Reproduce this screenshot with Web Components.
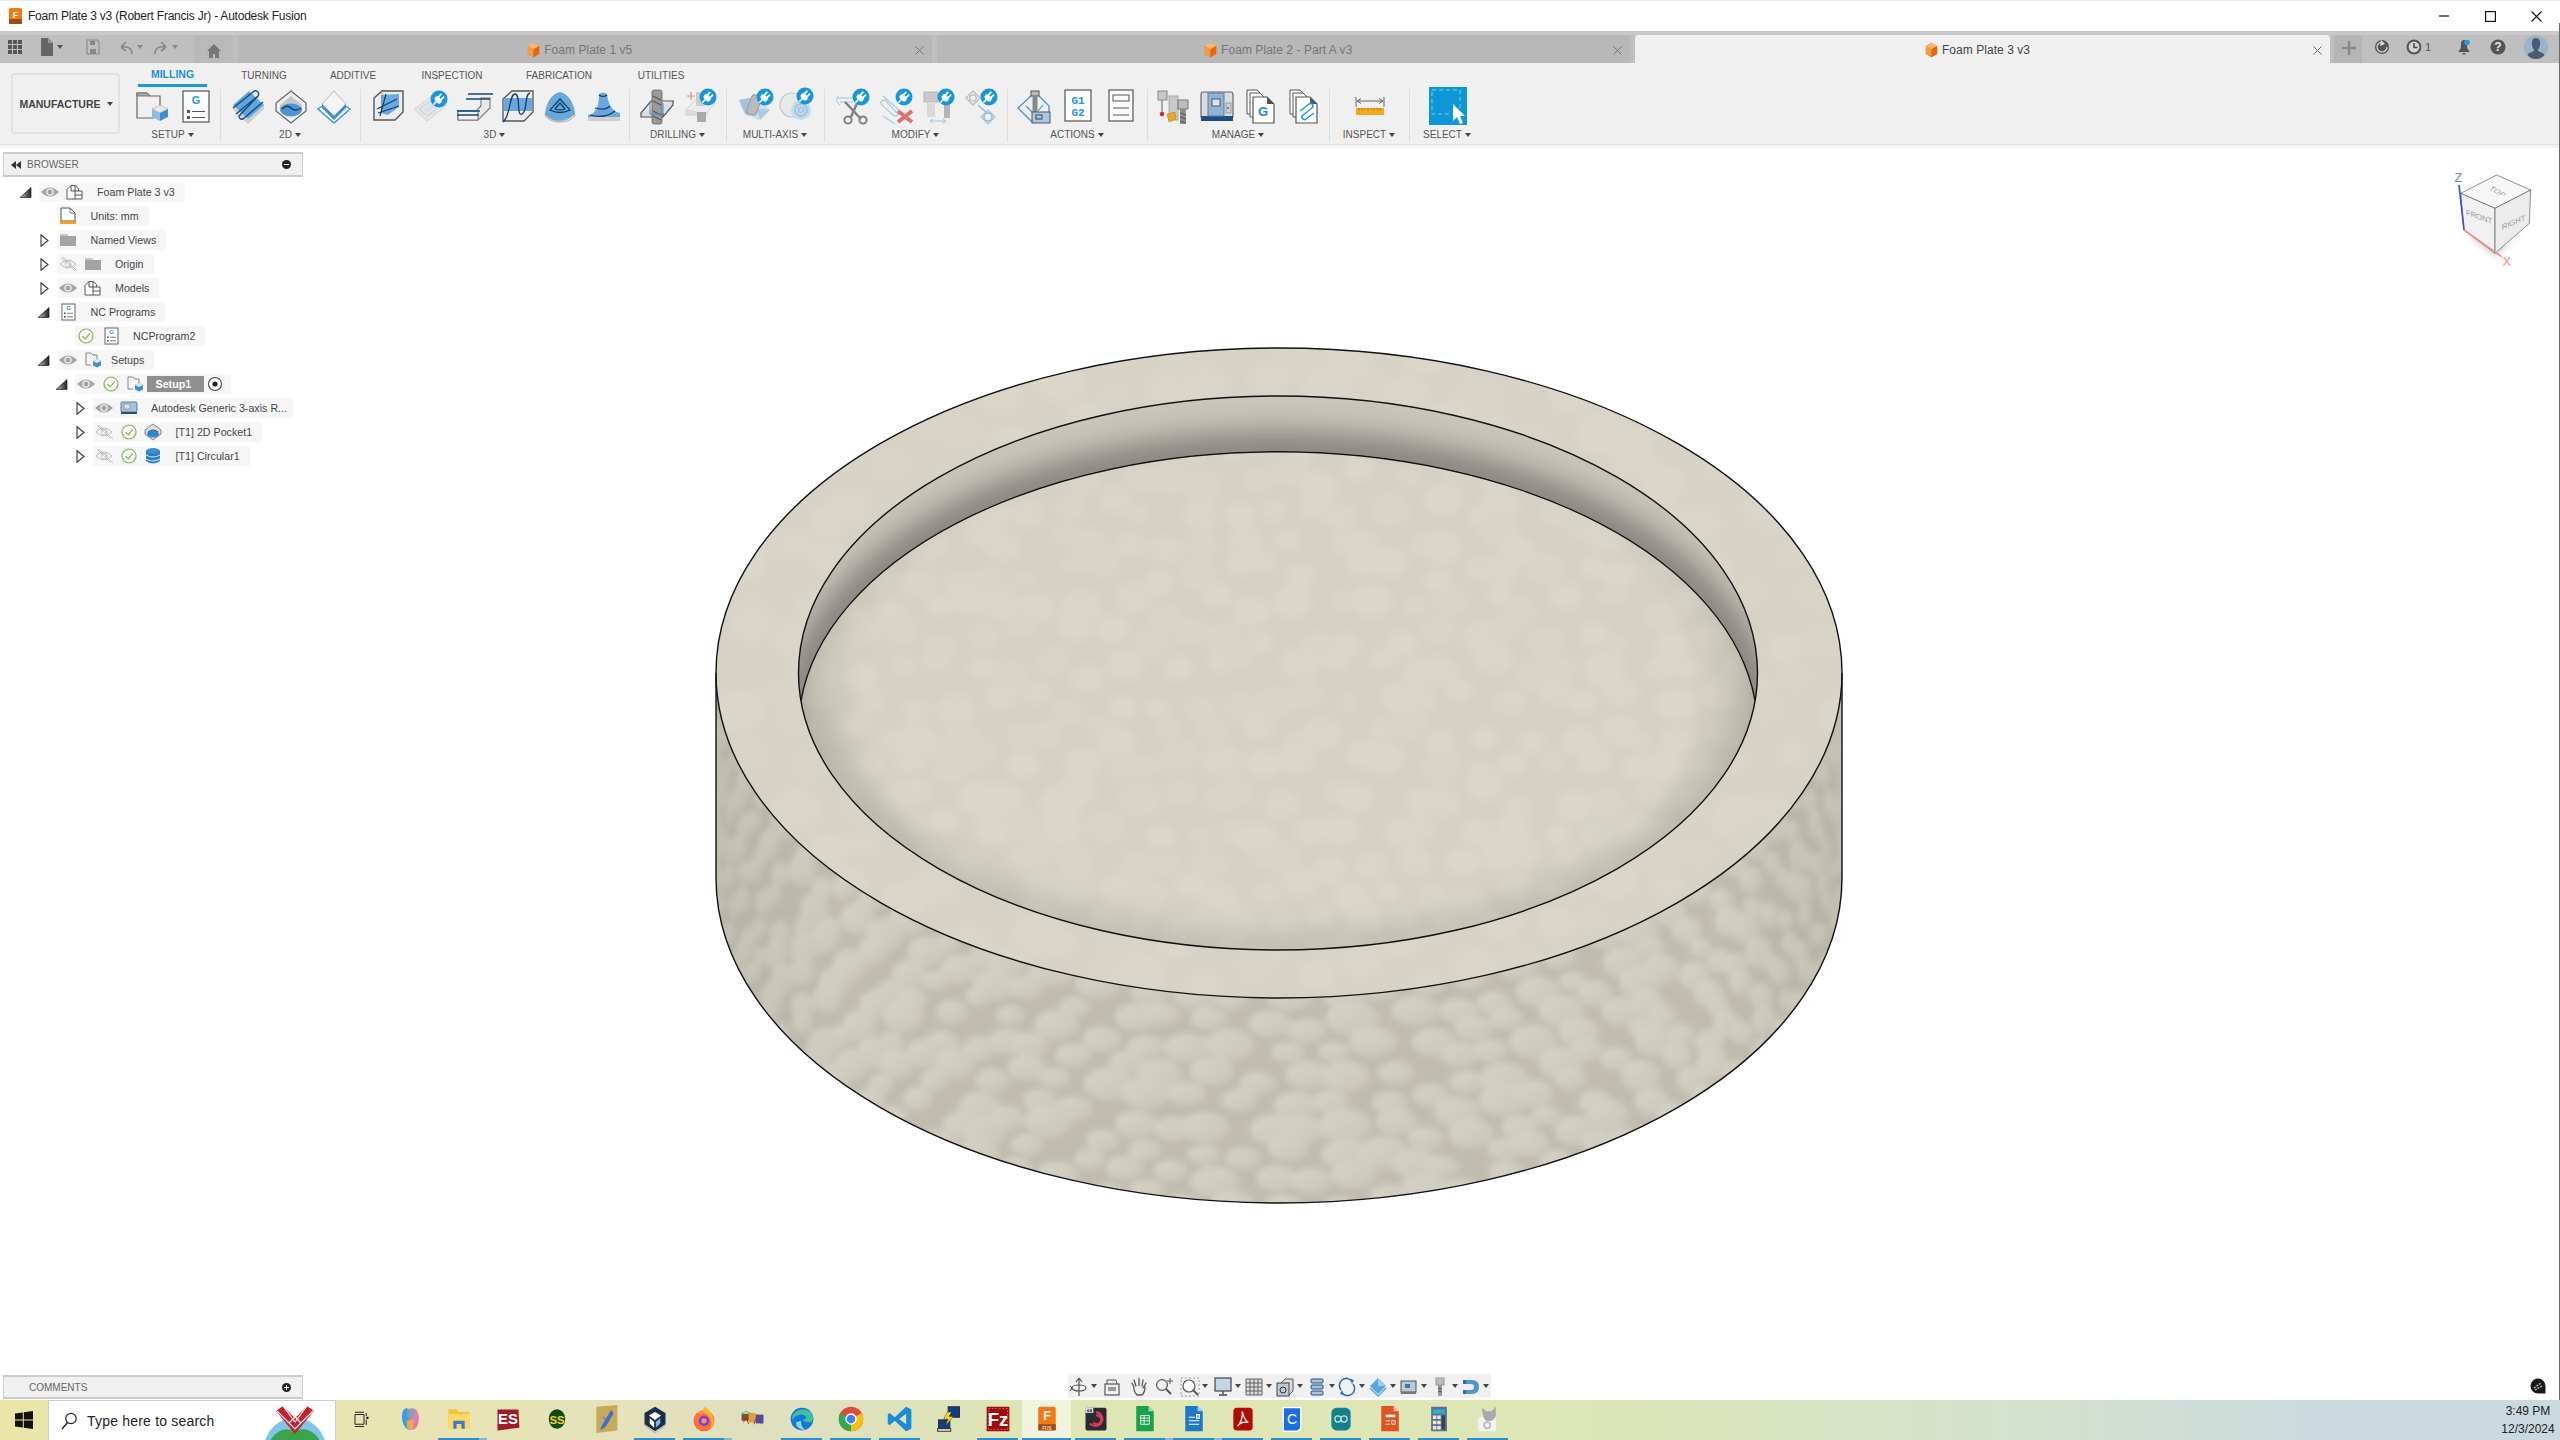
<!DOCTYPE html>
<html lang="en">
<head>
<meta charset="utf-8">
<title>Foam Plate 3 v3 - Autodesk Fusion</title>
<style>
html,body{margin:0;padding:0;background:#fff;overflow:hidden}
body{font-family:"Liberation Sans",Arial,sans-serif}
</style>
</head>
<body>
<app-window>
  <title-bar slot="title" text="Foam Plate 3 v3 (Robert Francis Jr) - Autodesk Fusion"></title-bar>
  <tab-strip slot="tabs">
    <doc-tab label="Foam Plate 1 v5"></doc-tab>
    <doc-tab label="Foam Plate 2 - Part A v3" class="w2"></doc-tab>
    <doc-tab label="Foam Plate 3 v3" active></doc-tab>
  </tab-strip>
  <ribbon-bar slot="ribbon">
    <ribbon-group label="SETUP" w="95" icons="setup ncprog"></ribbon-group>
    <ribbon-group label="2D" w="140" icons="a2d pocket2d face"></ribbon-group>
    <ribbon-group label="3D" w="269" icons="a3d p3d steep ramp scallop contour"></ribbon-group>
    <ribbon-group label="DRILLING" w="97" icons="drill drillp"></ribbon-group>
    <ribbon-group label="MULTI-AXIS" w="98" icons="multi1 multi2"></ribbon-group>
    <ribbon-group label="MODIFY" w="183" icons="scissors pathx toolmove points"></ribbon-group>
    <ribbon-group label="ACTIONS" w="140" icons="post g1g2 sheet"></ribbon-group>
    <ribbon-group label="MANAGE" w="182" icons="tools machine gdoc sdoc"></ribbon-group>
    <ribbon-group label="INSPECT" w="80" icons="measure"></ribbon-group>
    <ribbon-group label="SELECT" w="75" icons="select" last></ribbon-group>
  </ribbon-bar>
  <work-space slot="work">
    <browser-panel>
      <tree-row level="0" exp="open" icons="eye model" gap="10" end="10">Foam Plate 3 v3</tree-row>
      <tree-row level="1" icons="units" gap="10" end="10">Units: mm</tree-row>
      <tree-row level="1" exp="closed" icons="folder" gap="10" end="10">Named Views</tree-row>
      <tree-row level="1" exp="closed" icons="eyeoff folder" gap="10" end="10">Origin</tree-row>
      <tree-row level="1" exp="closed" icons="eye model" gap="10" end="10">Models</tree-row>
      <tree-row level="1" exp="open" icons="nc" gap="10" end="10">NC Programs</tree-row>
      <tree-row level="2" icons="check nc" gap="10" end="10">NCProgram2</tree-row>
      <tree-row level="1" exp="open" icons="eye setupi" gap="6" end="10">Setups</tree-row>
      <tree-row level="2" exp="open" icons="eye check setupi" gap="0" end="4" selected>Setup1</tree-row>
      <tree-row level="3" exp="closed" icons="eye mach" gap="10" end="6">Autodesk Generic 3-axis R...</tree-row>
      <tree-row level="3" exp="closed" icons="eyeoff check tp2d" gap="10" end="10">[T1] 2D Pocket1</tree-row>
      <tree-row level="3" exp="closed" icons="eyeoff check tpc" gap="10" end="10">[T1] Circular1</tree-row>
    </browser-panel>
    <work-bottom>
      <comments-panel></comments-panel>
      <nav-bar></nav-bar>
      <chat-mark></chat-mark>
    </work-bottom>
  </work-space>
  <task-bar slot="task"></task-bar>
</app-window>

<script>
/* ---------- icon library ---------- */
const plug=(x,y,r=8)=>`<circle cx="${x}" cy="${y}" r="${r}" fill="#1896d8"/><g transform="translate(${x} ${y}) rotate(45) scale(${r/8})" fill="#fff"><rect x="-3.6" y="-1.4" width="7.2" height="5" rx="2"/><rect x="-2.6" y="-5" width="1.6" height="4"/><rect x="1" y="-5" width="1.6" height="4"/><rect x="-.7" y="3" width="1.4" height="4.5"/></g>`;
const cube=(x,y,s)=>`<g transform="translate(${x} ${y}) scale(${s})"><polygon points="8,0 16,4 8,8 0,4" fill="#e9e9e9" stroke="#999" stroke-width=".5"/><polygon points="0,4 8,8 8,16 0,12" fill="#8fbce2"/><polygon points="16,4 8,8 8,16 16,12" fill="#3c8fd3"/></g>`;
const doc=(x,y,w,h,f=7)=>`<path d="M${x} ${y}H${x+w-f}L${x+w} ${y+f}V${y+h}H${x}Z" fill="#fff" stroke="#555" stroke-width="1.2"/><path d="M${x+w-f} ${y}L${x+w} ${y+f}H${x+w-f}Z" fill="#555"/>`;
const T=(x,y,s,t,c,w=700,fam='"Liberation Sans",sans-serif')=>`<text x="${x}" y="${y}" font-size="${s}" font-weight="${w}" fill="${c}" text-anchor="middle" font-family='${fam}'>${t}</text>`;
const orange=`<polygon points="8,0 15,4 15,14 8,18 1,14 1,4" fill="#f07f1b"/><polygon points="8,0 15,4 8,8 1,4" fill="#ffb56e"/><polygon points="1,4 8,8 8,18 1,14" fill="#f59a45"/><polygon points="15,4 8,8 8,18 15,14" fill="#e2680f"/>`;
const ICONS={
 setup:`<path d="M5 20V7h10l3 3h10v13" fill="none" stroke="#666" stroke-width="1.2"/><path d="M5 7h10l3 3H5z" fill="#aaa" stroke="#666" stroke-width=".8"/><path d="M5 20v12h17" fill="none" stroke="#666" stroke-width="1.2"/>${cube(20,19,1)}`,
 ncprog:`<rect x="8" y="5" width="26" height="31" fill="#fbfbfb" stroke="#555" stroke-width="1.2"/>${T(21,18,11,'G','#2a93dc')}<rect x="12" y="24" width="3" height="3" fill="#555"/><rect x="12" y="30" width="3" height="3" fill="#555"/><path d="M17 25.5H30M17 31.5H30" stroke="#555" stroke-width="1.1"/>`,
 a2d:`<polygon points="5,24 20,38 36,23 36,19 20,33 5,19" fill="#cfcfcf"/><polygon points="5,19 21,5 36,19 20,33" fill="#5fa5de"/><path d="M5 22 L25 6 a3 3 0 0 1 5 4 L8 28 M30 10 L11 30 a3 3 0 0 0 4 3 L35 16" fill="none" stroke="#17497f" stroke-width="1.4"/>`,
 pocket2d:`<polygon points="20,5 35,17 35,25 20,37 5,25 5,17" fill="#eee" stroke="#666" stroke-width="1.2"/><polygon points="20,10 31,19 31,22 20,31 9,22 9,19" fill="#c6c6c6"/><ellipse cx="20" cy="24" rx="11" ry="6.5" fill="#4e94d3"/><path d="M11 23Q16 18 20 22T30 22" fill="none" stroke="#143f6b" stroke-width="1.4"/>`,
 face:`<polygon points="20,12 36,23 20,37 4,23" fill="#fff" stroke="#3b93da" stroke-width="1.4"/><polygon points="8,18 20,5 32,18 20,30" fill="#f4f4f4" stroke="#aaa" stroke-width=".8"/><polygon points="8,18 20,30 32,18 32,22 20,34 8,22" fill="#3c8fd3"/>`,
 a3d:`<polygon points="6,12 14,5 35,5 35,26 27,34 6,34" fill="#ededed" stroke="#555" stroke-width="1.4"/><polygon points="13,9 31,8 31,21 20,29 13,27" fill="#69a8dd"/><path d="M9 23L29 13M10 27L31 20M18 8L12 30" fill="none" stroke="#143f6b" stroke-width="1.2"/><path d="M14 5 L14 12" stroke="#999" stroke-width=".8"/>`,
 p3d:`<polygon points="3,23 24,8 35,20 16,35" fill="#e6e6e6" stroke="#d4d4d4"/><polygon points="8,23 24,12 30,20 16,30" fill="none" stroke="#bcd0df"/><polygon points="12,23 24,15 27,20 16,27" fill="#d3e2ee"/>${plug(28,13,8.5)}`,
 steep:`<polygon points="4,25 22,25 27,20 27,12 36,12 36,22 24,34 4,34" fill="#e9e9e9" stroke="#777" stroke-width="1.1"/><polygon points="4,25 24,25 24,34 4,34" fill="#f2f2f2" stroke="#777" stroke-width="1.1"/><path d="M14 8H39M12 13H36M3 25H26M3 29H25" stroke="#14467c" stroke-width="1.5"/>`,
 ramp:`<polygon points="6,13 15,5 36,5 36,26 27,35 6,35" fill="#ededed" stroke="#555" stroke-width="1.3"/><rect x="7" y="12" width="28" height="13" fill="#69a8dd"/><path d="M6 36C14 30 12 8 18 8C24 8 19 31 25 28C31 26 27 8 33 7" fill="none" stroke="#143f6b" stroke-width="1.3"/>`,
 scallop:`<path d="M5 28C5 26 7 9 20 6C33 9 35 26 35 28C24 37 12 37 5 28Z" fill="#69a8dd"/><path d="M5 28C12 37 26 37 35 28C35 32 28 36 20 36C12 36 5 32 5 28Z" fill="#f1f1f1" stroke="#999" stroke-width=".8"/><path d="M20 13L30 24Q20 29 10 24Z M20 17L25 23Q20 25 15 23Z" fill="none" stroke="#123f6c" stroke-width="1.3"/>`,
 contour:`<path d="M5 35V29Q16 28 16 8Q20 5 24 8Q26 25 37 27V35Z" fill="#69a8dd"/><path d="M5 35H37V31H5Z" fill="#cfcfcf"/><path d="M16 9Q20 12 24 9M12 22Q22 25 27 20M7 29Q22 33 32 25" fill="none" stroke="#123f6c" stroke-width="1.2"/>`,
 drill:`<polygon points="4,27 14,15 36,15 26,27" fill="#ededed" stroke="#555" stroke-width="1.2"/><path d="M4 27V31H26L36 19V15M26 27V31" fill="#ddd" stroke="#555" stroke-width="1.2"/><rect x="15" y="4" width="10" height="34" rx="2" fill="#9a9a9a" stroke="#666" stroke-width=".8"/><path d="M16 10L24 14M16 15L24 19M16 25L24 29M16 30L24 34" stroke="#555" stroke-width="1.2"/><path d="M13 17V28H26V17" fill="none" stroke="#3c8fd3" stroke-width="1"/>`,
 drillp:`<polygon points="6,24 17,12 35,17 26,28" fill="#ececec" stroke="#cfcfcf"/><path d="M6 24V29H26V28" fill="#dcdcdc" stroke="#cfcfcf"/><rect x="17" y="26" width="9" height="10" fill="#aaa"/><path d="M7 10H15M11 6V14" stroke="#e58a8a" stroke-width="1.2"/><rect x="16" y="6" width="9" height="14" fill="#ccc"/>${plug(28,11,8.5)}`,
 multi1:`<polygon points="5,14 24,10 36,24 24,34 11,28" fill="#cfe0ef"/><polygon points="5,14 16,12 16,30 11,28" fill="#9fc3e3"/><polygon points="22,22 36,24 26,34" fill="#a9cbe6"/><rect x="15" y="9" width="10" height="20" rx="3" transform="rotate(20 20 19)" fill="#bbb" stroke="#999"/>${plug(31,11,8.5)}`,
 multi2:`<circle cx="15" cy="19" r="12" fill="#e9e9e9" stroke="#c6c6c6" stroke-width="1.2"/><circle cx="24" cy="24" r="10" fill="#c5dcef"/><circle cx="24" cy="24" r="6" fill="none" stroke="#a0c4e2" stroke-width="2"/><circle cx="24" cy="24" r="2.5" fill="none" stroke="#a0c4e2" stroke-width="1.5"/>${plug(28,10,8.5)}`,
 scissors:`<path d="M6 12H26M8 16H21M6 10Q3 16 8 19" fill="none" stroke="#a6c4dc" stroke-width="1"/><path d="M13 16L29 33M26 15L19 31" stroke="#7f7f7f" stroke-width="2.4"/><circle cx="16" cy="34" r="3.6" fill="none" stroke="#808080" stroke-width="2"/><circle cx="31" cy="34" r="3.6" fill="none" stroke="#808080" stroke-width="2"/>${plug(29,11,8.5)}`,
 pathx:`<path d="M8 10L24 24a4 4 0 0 1-6 5L6 18a3 3 0 0 1 5-3L23 28M8 30L20 38" fill="none" stroke="#afcce2" stroke-width="1.3"/><path d="M23 25L37 36M37 25L23 36" stroke="#e06f6f" stroke-width="4"/>${plug(29,11,8.5)}`,
 toolmove:`<rect x="6" y="6" width="14" height="10" fill="#c9c9c9" stroke="#b5b5b5"/><rect x="9" y="16" width="8" height="15" fill="#d9d9d9"/><rect x="26" y="18" width="6" height="14" fill="#b5b5b5"/><path d="M12 35H28M12 35l3-2M12 35l3 2M28 35l-3-2M28 35l-3 2" stroke="#a8c6de" stroke-width="1"/>${plug(28,11,8.5)}`,
 points:`<path d="M12 5l7 7-7 7-7-7z" fill="none" stroke="#bdbdbd" stroke-width="1.4"/><circle cx="12" cy="12" r="3.2" fill="none" stroke="#bdbdbd" stroke-width="1.3"/><path d="M17 19L26 27" stroke="#8fb8d9" stroke-width="1.4"/><path d="M27 24l7 7-7 7-7-7z" fill="none" stroke="#a3c3dd" stroke-width="1.2"/><circle cx="27" cy="31" r="4" fill="none" stroke="#8fb8d9" stroke-width="1.5"/>${plug(28,11,8.5)}`,
 post:`<path d="M17 9L3 22L17 36" fill="none" stroke="#3e92da" stroke-width="1.3"/><path d="M24 10L34 20V26" fill="none" stroke="#3e92da" stroke-width="1.3"/><path d="M11 20L17 26M28 19L23 25" fill="none" stroke="#3e92da" stroke-width="1.1"/><rect x="16" y="5" width="8" height="5" fill="#bbb" stroke="#555"/><rect x="17.5" y="10" width="5" height="16" fill="#888"/><rect x="17" y="26" width="18" height="11" fill="#a9c8e4" stroke="#555"/><rect x="21" y="29" width="6" height="4" fill="none" stroke="#345"/>`,
 g1g2:`<rect x="7" y="4" width="26" height="31" fill="#fbfbfb" stroke="#555" stroke-width="1.2"/>${T(20,18,11,'G1','#2a93dc',700,'"Liberation Mono",monospace')}${T(20,30,11,'G2','#2a93dc',700,'"Liberation Mono",monospace')}`,
 sheet:`<rect x="8" y="4" width="24" height="31" fill="#fbfbfb" stroke="#555" stroke-width="1.2"/><rect x="12" y="9" width="16" height="6" fill="none" stroke="#555"/><path d="M12 22H28M12 29H28" stroke="#555" stroke-width="1"/>`,
 tools:`<rect x="4" y="5" width="9" height="9" fill="#c8c8c8" stroke="#888"/><path d="M8 14V26" stroke="#777" stroke-width="1.2"/><circle cx="8" cy="28" r="2.2" fill="#d9232e"/><rect x="15" y="10" width="9" height="24" fill="#c9c9c9" stroke="#aaa"/><polygon points="13,28 21,26 22,33 15,36" fill="#e6ab2a" stroke="#b98414" stroke-width=".6"/><rect x="24" y="14" width="10" height="9" fill="#bdbdbd" stroke="#777"/><rect x="26" y="23" width="6" height="15" fill="#8f8f8f"/><path d="M26 27l6 2M26 31l6 2M26 35l6 2" stroke="#555"/>`,
 machine:`<path d="M6 6Q4 6 4 9V31H36V9Q36 6 34 6Z" fill="#dcdcdc" stroke="#666" stroke-width="1.2"/><rect x="4" y="30" width="32" height="5" fill="#1f4f80"/><rect x="11" y="7" width="16" height="23" fill="#8fb4d8" stroke="#5b7fa5"/><rect x="15" y="13" width="8" height="7" fill="#d9e4ee" stroke="#556"/><rect x="29" y="17" width="5" height="10" fill="#c9d3dc" stroke="#777" stroke-width=".6"/><circle cx="31" cy="22" r="1" fill="#c33"/>`,
 gdoc:`<path d="M7 4H17L21 8V28H7Z" fill="#fff" stroke="#555"/><path d="M10 7H20L24 11V31H10Z" fill="#fff" stroke="#555"/>${doc(13,11,21,26,7)}${T(23,30,13,'G','#1f86d6')}`,
 sdoc:`<path d="M7 4H17L21 8V28H7Z" fill="#fff" stroke="#555"/><path d="M10 7H20L24 11V31H10Z" fill="#fff" stroke="#555"/>${doc(13,11,21,26,7)}<path d="M17 25L26 18a2.5 2.5 0 0 1 3 4L20 29a2.5 2.5 0 0 0 3 4L31 27" fill="none" stroke="#2a93dc" stroke-width="1.5"/>`,
 measure:`<path d="M6 11V21M34 11V21" stroke="#666" stroke-width="1"/><path d="M7 15H33M7 15l4-2.5M7 15l4 2.5M33 15l-4-2.5M33 15l-4 2.5" stroke="#666" stroke-width="1" fill="none"/><rect x="6" y="22" width="28" height="7" fill="#f0a91e"/><path d="M9 22v2M12 22v3M15 22v2M18 22v3M21 22v2M24 22v3M27 22v2M30 22v3" stroke="#9a6a10" stroke-width=".7"/>`,
 select:`<rect x="1" y="1" width="38" height="38" fill="#0f96d6"/><rect x="4" y="4" width="28" height="24" fill="none" stroke="#62e2c4" stroke-width="1" stroke-dasharray="4 3"/><path d="M25 18V35L29 31L32 38L35 37L32 30L37 30Z" fill="#fff"/>`,
 eye:`<path d="M1 10Q10 1 19 10Q10 19 1 10Z" fill="#a6a6a6"/><circle cx="10" cy="10" r="3.8" fill="#e5e5e5"/><circle cx="10" cy="10" r="2.2" fill="#a0a0a0"/>`,
 eyeoff:`<path d="M2 10Q10 2 18 10Q10 18 2 10Z" fill="none" stroke="#bdbdbd" stroke-width="1"/><circle cx="10" cy="10" r="3" fill="none" stroke="#c6c6c6"/><path d="M3 3L17 17M5 3L19 17" stroke="#bdbdbd" stroke-width=".9"/>`,
 check:`<circle cx="10" cy="10" r="7" fill="#fafafa" stroke="#87b24a" stroke-width="1.2"/><path d="M6.5 10L9.3 12.8L14 7.2" fill="none" stroke="#87b24a" stroke-width="1.2"/>`,
 model:`<path d="M2 7.5L6 3.5H10V9H17V17H2Z M6 3.5V9H10 M10 3.5L13.5 6.5V9 M10 17V9 M10 13H17" fill="#fff" stroke="#444" stroke-width=".9"/>`,
 units:`<path d="M3 2H12L17 7V15H3Z" fill="#fff" stroke="#555" stroke-width="1"/><path d="M12 2V7H17" fill="none" stroke="#555" stroke-width=".8"/><rect x="2" y="15" width="16" height="3" fill="#eaa41e"/>`,
 folder:`<path d="M2 4H9L10 6H18V16H2Z" fill="#a3a3a3"/><path d="M2 4H9L10 6H2Z" fill="#c8c8c8"/>`,
 nc:`<rect x="4" y="2" width="13" height="16" fill="#fff" stroke="#555" stroke-width=".9"/>${T(10.5,8,6,'G','#2a93dc')}<rect x="6" y="10.5" width="1.6" height="1.6" fill="#444"/><rect x="6" y="14" width="1.6" height="1.6" fill="#444"/><path d="M9 11.3H15M9 14.8H15" stroke="#444" stroke-width=".7"/>`,
 setupi:`<path d="M3 9V3H8L10 5H14V9M3 9V15H8" fill="none" stroke="#777" stroke-width=".9"/><g transform="translate(10 9)"><polygon points="4,0 8,2 8,6.5 4,8.5 0,6.5 0,2" fill="#3c8fd3"/><polygon points="4,0 8,2 4,4 0,2" fill="#dbe9f5"/></g>`,
 mach:`<rect x="2" y="4" width="16" height="10" rx="1" fill="#a9c3dd" stroke="#5a6f85" stroke-width=".9"/><rect x="5" y="6" width="6" height="5" fill="#d9e4ee" stroke="#5a6f85" stroke-width=".5"/><rect x="2" y="14" width="16" height="2" fill="#244f7a"/>`,
 tp2d:`<polygon points="10,2 18,8 18,12 10,18 2,12 2,8" fill="#ddd" stroke="#666" stroke-width=".8"/><ellipse cx="10" cy="12" rx="6" ry="3.5" fill="#2b86d0"/><path d="M5 10Q10 6 15 10" fill="none" stroke="#1a4f80" stroke-width="1"/>`,
 tpc:`<ellipse cx="10" cy="5" rx="7" ry="3" fill="#3c8fd3"/><path d="M3 5V15Q10 20 17 15V5Q10 10 3 5Z" fill="#2f7fc4"/><path d="M3 9Q10 13 17 9M3 13Q10 17 17 13" fill="none" stroke="#cfe3f3" stroke-width="1"/>`,
 target:`<circle cx="10" cy="10" r="6.5" fill="#fff" stroke="#444" stroke-width="1.1"/><circle cx="10" cy="10" r="2.6" fill="#222"/>`,
 apps:`<path d="M1 1H5V5H1ZM6 1H10V5H6ZM11 1H15V5H11ZM1 6H5V10H1ZM6 6H10V10H6ZM11 6H15V10H11ZM1 11H5V15H1ZM6 11H10V15H6ZM11 11H15V15H11Z" fill="#555"/>`,
 file:`<path d="M2 0H9L14 5V18H2Z" fill="#666"/><path d="M9 0V5H14" fill="#999"/>`,
 save:`<path d="M2 1H12L14 3V15H2Z" fill="none" stroke="#888" stroke-width="1.1"/><rect x="5" y="2" width="5" height="4" fill="#888"/><rect x="5" y="10" width="6" height="5" fill="#888"/>`,
 undo:`<path d="M14 15C14 9 10 7 3 8M3 8L8 3M3 8L8 12" fill="none" stroke="#888" stroke-width="1.7"/>`,
 redo:`<path d="M2 15C2 9 6 7 13 8M13 8L8 3M13 8L8 12" fill="none" stroke="#888" stroke-width="1.7"/>`,
 home:`<path d="M8 1L15 8H13V15H9V11H7V15H3V8H1Z" fill="#777"/>`,
 plus:`<path d="M8 1V15M1 8H15" stroke="#888" stroke-width="2.4"/>`,
 sync:`<circle cx="8" cy="8" r="7" fill="#555"/><path d="M8 3A5 5 0 1 0 13 8" fill="none" stroke="#ddd" stroke-width="1.2"/><path d="M7 1L11 5L6 7Z" fill="#ddd"/>`,
 job:`<circle cx="8" cy="8" r="7.5" fill="#555"/><circle cx="8" cy="8" r="5.4" fill="#d4d4d4"/><path d="M8 4V8.5H11.5" fill="none" stroke="#444" stroke-width="1.5"/>`,
 bell:`<path d="M8 1C5 1 5 4 5 7C5 10 3 11 2 13H14C13 11 11 10 11 7C11 4 11 1 8 1Z M6 14H10L8 16Z" fill="#555"/><circle cx="11" cy="3.5" r="2.8" fill="#1f9ee0"/>`,
 help:`<circle cx="8" cy="8" r="7.6" fill="#555"/>${T(8,12.4,12,'?','#e8e8e8')}`,
 avatar:`<circle cx="12" cy="12" r="12" fill="#9db3c9"/><path d="M12 3C8.5 3 7.5 6 8 10C8.4 12 9 13.5 10 14.5V16C7 17.5 4 18 3.5 20C6 23 9 24 12 24C15 24 18 23 20.5 20C20 18 17 17.5 14 16V14.5C15 13.5 15.6 12 16 10C16.5 6 15.5 3 12 3Z" fill="#4a5a72"/>`,
 orbit:`<path d="M10 1V19M10 1L7 5M10 1L13 5" fill="none" stroke="#555" stroke-width="1.2"/><ellipse cx="10" cy="11" rx="7" ry="3" fill="none" stroke="#555" stroke-width="1.2"/><path d="M3 11L1 9M3 11L1 14" stroke="#333"/>`,
 lookat:`<rect x="3" y="7" width="14" height="11" fill="none" stroke="#555" stroke-width="1.2"/><rect x="6" y="10" width="8" height="4" fill="#999"/><path d="M5 7V3H14L15 7" fill="none" stroke="#555"/>`,
 hand:`<path d="M5 10L3 6M7 9L5 3M10 8.5V1.5M13 9L14 3M14 11L17 6M5 10Q4 13 8 18H13Q16 15 16 10" fill="none" stroke="#555" stroke-width="1.3" stroke-linecap="round"/>`,
 zoomp:`<circle cx="8" cy="8" r="5.4" fill="none" stroke="#555" stroke-width="1.2"/><path d="M12 12L17 17" stroke="#555" stroke-width="2"/><path d="M16 1V7M13 4H19" stroke="#555"/>`,
 zoomw:`<rect x="1" y="1" width="18" height="18" fill="none" stroke="#999" stroke-dasharray="2 2"/><circle cx="9" cy="9" r="6" fill="#fff" stroke="#555" stroke-width="1.2"/><path d="M13 13L18 18" stroke="#555" stroke-width="2"/>`,
 monitor:`<rect x="2" y="1" width="16" height="13" fill="#c4d6e6" stroke="#444" stroke-width="1.2"/><path d="M10 14V17M6 18H14" stroke="#444" stroke-width="1.4"/>`,
 gridi:`<path d="M2 2H18V18H2ZM2 6H18M2 10H18M2 14H18M6 2V18M10 2V18M14 2V18" fill="#ddd" stroke="#555" stroke-width=".9"/>`,
 views:`<path d="M6 6L10 2H18V14L14 18H6Z" fill="#ddd" stroke="#555"/><rect x="2" y="6" width="12" height="13" fill="#b9cbdb" stroke="#444"/><circle cx="8" cy="13" r="3" fill="none" stroke="#333"/>`,
 layers:`<rect x="4" y="2" width="12" height="4" rx="1" fill="#a9c3dd" stroke="#1f4f80"/><rect x="4" y="8" width="12" height="4" rx="1" fill="#a9c3dd" stroke="#1f4f80"/><rect x="4" y="14" width="12" height="4" rx="1" fill="#a9c3dd" stroke="#1f4f80"/>`,
 cycle:`<path d="M4 13A7 7 0 0 1 15 4M16 7A7 7 0 0 1 5 16" fill="none" stroke="#2a6fb0" stroke-width="1.6"/><path d="M13 2L17 3L15 7ZM7 18L3 17L5 13Z" fill="#2a6fb0"/>`,
 stack:`<path d="M10 1L18 9L10 17L2 9Z" fill="#5aa7e0"/><path d="M2 11L10 19L18 11" fill="none" stroke="#5aa7e0" stroke-width="1.5"/><path d="M10 1L18 9L10 9Z" fill="#9ccbec"/>`,
 box2:`<rect x="2" y="4" width="15" height="11" fill="#b9cbdb" stroke="#555"/><rect x="6" y="7" width="5" height="4" fill="#3c77ad"/><rect x="2" y="15" width="15" height="2" fill="#777"/>`,
 toolv:`<rect x="6" y="1" width="8" height="7" fill="#bbb" stroke="#999"/><rect x="8" y="8" width="4" height="11" fill="#999"/><path d="M8 11l4 1M8 14l4 1" stroke="#555"/>`,
 magnet:`<path d="M2 3H11Q18 3 18 10Q18 17 11 17H2V13H10Q13 13 13 10Q13 7 10 7H2Z" fill="#4f95cf"/><rect x="2" y="3" width="3" height="4" fill="#2b6da7"/><rect x="2" y="13" width="3" height="4" fill="#2b6da7"/>`,
 taskview:`<path d="M8 7H20M8 26H20M8 10H20V23H8Z M23 8V12M23 17V24" fill="none" stroke="#222" stroke-width="1.3"/><rect x="23" y="13" width="3" height="3" fill="#222"/>`,
 copilot:`<path d="M10 3Q15 2 16 8L21 26Q19 30 14 29Q7 26 6 14Q6 5 10 3Z" fill="#3f9bea"/><path d="M20 3Q26 4 27 14Q27 25 21 29Q17 30 16 24L12 7Q14 2 20 3Z" fill="#e56bb2" opacity=".9"/><path d="M12 18L21 16L20 28Q14 30 12 26Z" fill="#f2b23a" opacity=".85"/><path d="M12 4L22 4L21 14L12 15Z" fill="#3ac0b4" opacity=".55"/>`,
 explorer:`<path d="M3 4H13L15 7H29V28H3Z" fill="#f4c542"/><rect x="3" y="10" width="26" height="18" fill="#ffd968"/><path d="M9 28V18H23V28H19V22H13V28Z" fill="#2f80c8"/>`,
 es:`<path d="M4 5H28L29 26L4 29Z" fill="#9e1b2c"/>${T(16,22,17,'ES','#fff')}`,
 ss:`<ellipse cx="16" cy="16" rx="11" ry="13" fill="#0f4a14"/>${T(16,22,15,'SS','#f5d21a')}`,
 bluetool:`<path d="M5 2L29 0V29L5 32Z" fill="#c9a95a"/><path d="M22 6L12 23L10 28L15 25L24 10Z M12 14L19 18" fill="#3d6ed4" stroke="#3d6ed4"/>`,
 vbox:`<polygon points="16,2 28,9 28,22 16,30 4,22 4,9" fill="#1a2e4a"/><polygon points="16,8 23,12 16,17 9,12" fill="#fff"/><polygon points="10,15 15,19 15,26 10,21" fill="#fff"/><polygon points="22,15 17,19 17,26 22,21" fill="#7fb8e5"/><path d="M4 23L16 32L28 23" fill="none" stroke="#b4bcc6" stroke-width="1.5"/>`,
 firefox:`<circle cx="16" cy="18" r="12" fill="#ff7139"/><path d="M8 8Q14 14 16 2Q24 6 26 14Q30 24 22 28Q30 14 14 8Z" fill="#ffb02e"/><circle cx="16" cy="18" r="6" fill="#7542e5"/><circle cx="16" cy="18" r="3" fill="#ff9640"/>`,
 misc:`<rect x="3" y="10" width="9" height="8" fill="#7a5230"/><rect x="11" y="9" width="8" height="11" fill="#d7a33e"/><rect x="19" y="11" width="9" height="10" fill="#3a56b0"/><path d="M5 20L8 14L11 22M17 22L21 11L26 22" stroke="#c22" fill="none"/><path d="M3 10L8 7L14 10" stroke="#4a9" fill="none"/>`,
 edge:`<circle cx="16" cy="16" r="13" fill="#1678d4"/><path d="M5 12Q14 0 26 8Q31 14 27 19Q20 21 17 17Q25 14 17 11Q8 10 5 18Z" fill="#3bc2a0"/><path d="M9 20Q10 28 20 29Q14 24 15 18Z" fill="#8fd5f7"/>`,
 chrome:`<circle cx="16" cy="16" r="14" fill="#dd4b39"/><path d="M16 16L28.1 9A14 14 0 0 1 16 30Z" fill="#f4c20d"/><path d="M16 16L16 30A14 14 0 0 1 3.9 9Z" fill="#2fa84f"/><circle cx="16" cy="16" r="6.5" fill="#fff"/><circle cx="16" cy="16" r="5" fill="#3c84e8"/>`,
 vscode:`<path d="M23 2L29 5V27L23 30L10 18L4 23L2 21V11L4 9L10 14ZM23 10L15 16L23 22Z" fill="#1b8ad8"/>`,
 putty:`<rect x="15" y="2" width="13" height="12" fill="#123c8a" stroke="#222"/><rect x="4" y="17" width="13" height="10" fill="#123c8a" stroke="#222"/><rect x="3" y="27" width="15" height="3" fill="#ddd" stroke="#222"/><path d="M14 8L10 16H15L12 24L21 13H16L19 8Z" fill="#f4dc25" stroke="#222" stroke-width=".5"/>`,
 filezilla:`<rect x="3" y="2" width="26" height="28" fill="#a10d0d"/><rect x="5" y="4" width="22" height="24" fill="none" stroke="#d96a6a" stroke-dasharray="2 2"/>${T(16,24,21,'Fz','#fff',700)}`,
 fusion:`<rect x="6" y="2" width="20" height="27" rx="2" fill="#f37a13"/><rect x="6" y="22" width="20" height="7" fill="#9a4d14"/>${T(16,17,14,'F','#fff')}${T(16,28,5.5,'FUS','#f6d7b8')}`,
 resolve:`<rect x="4" y="3" width="24" height="26" rx="2" fill="#2a2a30"/><path d="M16 8A8 8 0 1 1 9 21M16 12A5 5 0 1 1 13 20" fill="none" stroke="#e0385c" stroke-width="2.4"/><rect x="4" y="3" width="9" height="6" fill="#ddd"/>${T(8.5,8,5,'64','#222')}`,
 lcalc:`<path d="M6 1H20L26 7V30H6Z" fill="#18a24a"/><path d="M20 1L26 7H20Z" fill="#9fdcb4"/><path d="M11 12H21V22H11Z M11 15H21M11 18H21M15 12V22" fill="none" stroke="#fff" stroke-width="1"/>`,
 lwrite:`<path d="M6 1H20L26 7V30H6Z" fill="#1d78c8"/><path d="M20 1L26 7H20Z" fill="#9fd0f2"/><path d="M10 14H17M10 18H22M10 22H22M19 11H22V15H19Z" stroke="#fff" fill="none" stroke-width="1.4"/>`,
 acrobat:`<rect x="5" y="3" width="22" height="26" rx="4" fill="#b30b00"/><path d="M10 24C14 20 16 12 15 8C17 8 15 15 22 20C18 19 13 20 10 24Z" fill="none" stroke="#fff" stroke-width="1.4"/>`,
 cdoc:`<path d="M6 3H26V27L22 30H6Z" fill="#1e6de0" stroke="#fff" stroke-width="1.5"/>${T(16,22,16,'C','#fff',400)}`,
 arduino:`<rect x="5" y="3" width="22" height="26" rx="6" fill="#16808a"/><path d="M9 16a3.5 3.5 0 0 1 7 0a3.5 3.5 0 0 0 7 0a3.5 3.5 0 0 0-7 0a3.5 3.5 0 0 1-7 0Z" fill="none" stroke="#bfe6e6" stroke-width="1.4"/>`,
 limp:`<path d="M6 1H20L26 7V30H6Z" fill="#e2521f"/><path d="M20 1L26 7H20Z" fill="#f7bca0"/><rect x="11" y="11" width="11" height="3" fill="#fff"/><path d="M11 18H16M11 22H16M18 18H22V22H18Z" stroke="#fff" fill="none"/>`,
 calc:`<rect x="7" y="2" width="18" height="28" fill="#5e7186"/><rect x="9" y="5" width="14" height="5" fill="#2eaad8"/><path d="M9 12h4v4H9zM14 12h4v4h-4zM9 18h4v4H9zM14 18h4v4h-4zM9 24h4v4H9zM14 24h4v4h-4z" fill="#e8e8e8"/><rect x="19" y="12" width="4" height="16" fill="#32465c"/>`,
 gimp:`<rect x="5" y="14" width="20" height="16" fill="#f3f3f3"/><path d="M10 10L9 3L14 7H20L25 2L25 12Q22 20 14 18Q11 16 10 10Z" fill="#a9a9a9"/><circle cx="15" cy="23" r="3.5" fill="none" stroke="#bbb" stroke-width="2"/>`
};
class XIcon extends HTMLElement{
  connectedCallback(){
    const w=+this.getAttribute('w')||40,h=+this.getAttribute('h')||w,vb=this.getAttribute('vb')||`0 0 ${w} ${h}`;
    this.attachShadow({mode:'open'}).innerHTML=`<style>:host{display:inline-flex;flex:none;width:${w}px;height:${h}px}svg{display:block;overflow:visible}</style><svg width="${w}" height="${h}" viewBox="${vb}">${ICONS[this.getAttribute('name')]||''}</svg>`;
  }
}
customElements.define('x-icon',XIcon);
const caret=(c='#555',m='0 0 0 4px')=>`<i style="display:inline-block;width:0;height:0;border:3px solid transparent;border-top:4px solid ${c};border-bottom:0;margin:${m};vertical-align:middle"></i>`;

class AppWindow extends HTMLElement{constructor(){super();this.attachShadow({mode:'open'}).innerHTML=`<style>
:host{display:grid;grid-template-rows:31px 32px 85px 1252px 40px;width:2560px;height:1440px;position:relative;overflow:hidden;color:#444;font-family:"Liberation Sans",Arial,sans-serif}
.edge{position:absolute;right:0;top:23px;bottom:40px;width:1px;background:#6a6a6a}
</style><slot name="title"></slot><slot name="tabs"></slot><slot name="ribbon"></slot><slot name="work"></slot><slot name="task"></slot><div class="edge"></div>`}}
customElements.define('app-window',AppWindow);

class TitleBar extends HTMLElement{connectedCallback(){this.attachShadow({mode:'open'}).innerHTML=`<style>
:host{display:flex;align-items:center;background:#fff;border-top:1px solid #ececec;box-sizing:border-box;height:31px;padding-left:9px;padding-right:1px}
svg{display:block}
.t{margin-left:6px;font-size:12px;color:#222;white-space:nowrap;letter-spacing:-.22px}
.ctl{margin-left:auto;display:flex}
.ctl b{display:flex;width:46px;height:30px;align-items:center;justify-content:center}
</style>
<svg width="13" height="16" viewBox="0 0 13 16"><rect width="13" height="16" rx="1.5" fill="#f37a13"/><rect y="11" width="13" height="5" fill="#9a4d14"/><text x="6.5" y="9.5" font-size="9" font-weight="700" fill="#fff" text-anchor="middle" font-family="Liberation Sans">F</text></svg>
<span class="t">${this.getAttribute('text')}</span>
<div class="ctl">
<b><svg width="10" height="10"><path d="M0 5H10" stroke="#111" stroke-width="1.2"/></svg></b>
<b><svg width="11" height="11"><rect x=".6" y=".6" width="9.8" height="9.8" fill="none" stroke="#111" stroke-width="1.2"/></svg></b>
<b><svg width="11" height="11"><path d="M.5 .5L10.5 10.5M10.5 .5L.5 10.5" stroke="#111" stroke-width="1.1"/></svg></b>
</div>`}}
customElements.define('title-bar',TitleBar);

class TabStrip extends HTMLElement{connectedCallback(){this.attachShadow({mode:'open'}).innerHTML=`<style>
:host{display:flex;height:32px;background:linear-gradient(#c8c8c8 4px,#bfbfbf 4px);box-sizing:border-box;padding-top:4px}
.qa{width:194px;flex:none;display:flex;align-items:center;position:relative;box-sizing:border-box;padding:0 0 4px 7px}
.home{width:39px;flex:none;background:#b9b9b9;border-radius:3px 3px 0 0;display:flex;align-items:center;justify-content:center;margin-right:5px;padding-top:3px;box-sizing:border-box}
.tabs{display:flex;gap:5px;flex:none}
.plus{width:28px;background:#b5b5b5;margin-left:4px;display:flex;align-items:center;justify-content:center;border-radius:3px 3px 0 0;box-sizing:border-box;padding-bottom:3px}
.right{display:flex;align-items:center;height:24px;margin-left:12px;color:#555;font-size:11px}
</style>
<div class="qa"><x-icon name="apps" w="16"></x-icon>
<x-icon name="file" w="16" h="18" style="margin-left:16px"></x-icon>${caret('#555','0 0 0 2px')}
<x-icon name="save" w="16" style="margin-left:22px"></x-icon>
<x-icon name="undo" w="16" style="margin-left:17px"></x-icon>${caret('#888','0 0 0 3px')}
<x-icon name="redo" w="16" style="margin-left:10px"></x-icon>${caret('#888','0 0 0 3px')}</div>
<div class="home"><x-icon name="home" w="16"></x-icon></div>
<div class="tabs"><slot></slot></div>
<div class="plus"><x-icon name="plus" w="15"></x-icon></div>
<div class="right">
<x-icon name="sync" w="16"></x-icon>
<x-icon name="job" w="16" style="margin-left:16px"></x-icon><span style="margin-left:3px;width:8px">1</span>
<x-icon name="bell" w="16" style="margin-left:23px"></x-icon>
<x-icon name="help" w="16" style="margin-left:18px"></x-icon>
<x-icon name="avatar" w="24" style="margin-left:18px"></x-icon>
</div>`}}
customElements.define('tab-strip',TabStrip);

class DocTab extends HTMLElement{connectedCallback(){const a=this.hasAttribute('active');this.attachShadow({mode:'open'}).innerHTML=`<style>
:host{display:grid;grid-template-columns:1fr auto 1fr;align-items:center;width:${a?695:693.5}px;height:28px;background:${a?'#f0f0f0':'#b8b8b8'};border-radius:3px 3px 0 0;font-size:12px;color:${a?'#444':'#767676'};white-space:nowrap;letter-spacing:.05px}
.c{display:flex;align-items:center;gap:4px;padding-right:10px;padding-top:2px}
.x{justify-self:end;margin-right:8px;margin-top:2px;display:block}
svg{display:block}
</style><span></span><span class="c"><svg width="13" height="16" viewBox="0 0 16 18">${orange}</svg>${this.getAttribute('label')}</span>
<svg class="x" width="9" height="9"><path d="M.5 .5L8.5 8.5M8.5 .5L.5 8.5" stroke="${a?'#666':'#777'}" stroke-width="1"/></svg>`}}
customElements.define('doc-tab',DocTab);

class RibbonBar extends HTMLElement{connectedCallback(){
 const tabs=[['MILLING',69],['TURNING',114],['ADDITIVE',64],['INSPECTION',134],['FABRICATION',80],['UTILITIES',124]];
 this.attachShadow({mode:'open'}).innerHTML=`<style>
:host{display:block;height:85px;background:#f3f3f3;box-sizing:border-box}
.bar{display:grid;grid-template-columns:126px 1fr;grid-template-rows:24px 57px;height:81px;background:#f0f0f0;border-bottom:1px solid #e3e3e3;box-sizing:content-box}
.mf{grid-row:1/3;margin:10px 6px 10px 11px;border:2px solid #e2e2e2;border-radius:4px;display:flex;align-items:center;justify-content:center;font-size:10.5px;font-weight:700;color:#444;white-space:nowrap;padding-left:1px}
.tabs{display:flex;padding-left:12px;align-items:stretch}
.tabs span{display:flex;align-items:center;justify-content:center;font-size:10px;color:#555;box-sizing:border-box;padding-top:1px;flex:none;white-space:nowrap}
.tabs span.on{color:#1b90d2;border-bottom:3px solid #1f9ad8;font-weight:700;font-size:10.5px;padding-top:0}
.groups{display:flex}
</style><div class="bar"><div class="mf">MANUFACTURE${caret('#444','0 0 0 6px')}</div>
<div class="tabs">${tabs.map(([t,w],i)=>`<span class="${i?'':'on'}" style="width:${w}px">${t}</span>`).join('')}</div>
<div class="groups"><slot></slot></div></div>`}}
customElements.define('ribbon-bar',RibbonBar);

class RibbonGroup extends HTMLElement{connectedCallback(){
 const ic=this.getAttribute('icons').split(' ');
 this.attachShadow({mode:'open'}).innerHTML=`<style>
:host{display:flex;flex-direction:column;align-items:center;flex:none;width:${this.getAttribute('w')}px;box-sizing:border-box;height:53px;margin-top:2px;${this.hasAttribute('last')?'':'border-right:1px solid #dedede'}}
.r{display:flex;align-items:center;justify-content:center;height:34px;gap:3px}
.l{margin-top:5px;font-size:10px;line-height:14px;color:#555;white-space:nowrap;margin-left:-1px}
</style><div class="r">${ic.map(n=>`<x-icon name="${n}" w="40"></x-icon>`).join('')}</div><div class="l">${this.getAttribute('label')}${caret('#444','-1px 0 0 3px')}</div>`}}
customElements.define('ribbon-group',RibbonGroup);

class WorkSpace extends HTMLElement{constructor(){super();this.attachShadow({mode:'open'}).innerHTML=`<style>
:host{display:flex;flex-direction:column;justify-content:space-between;position:relative;height:1252px;background:#fff;box-sizing:border-box;padding:4px 0 1px 3px}
foam-plate{position:absolute;left:700px;top:192px}
view-cube{position:absolute;left:2440px;top:17px}
::slotted(*){position:relative}
</style><foam-plate></foam-plate><view-cube></view-cube><slot></slot>`}}
customElements.define('work-space',WorkSpace);

class FoamPlate extends HTMLElement{connectedCallback(){
 const O={cx:1279,cy:673,rx:563,ry:325},dz=205,I={cx:1278,cy:673,rx:479.5,ry:277},fz=55;
 const R=`x="700" y="340" width="1160" height="880"`;
 let seed=12345;const rnd=()=>{seed=(seed*16807)%2147483647;return seed/2147483647};
 /* soft cells over a flat face, on a jittered hexagonal lattice */
 const flat=(x0,y0,x1,y1,dx,dy,rx,ry,cols)=>{let s='',row=0;for(let y=y0;y<y1;y+=dy,row++){for(let x=x0+(row%2?dx/2:0);x<x1;x+=dx){const k=.7+rnd()*.55;s+=`<ellipse cx="${(x+(rnd()-.5)*dx*.7).toFixed(1)}" cy="${(y+(rnd()-.5)*dy*.7).toFixed(1)}" rx="${(rx*k).toFixed(1)}" ry="${(ry*k).toFixed(1)}" fill="${cols[Math.floor(rnd()*cols.length)]}"/>`}}return s};
 /* cells wrapped round the cylinder wall: they narrow toward the silhouette */
 const wall=()=>{let s='';const dTh=47/O.rx,rows=9;for(let r=0;r<rows;r++){for(let th=-Math.PI/2+(r%2?dTh/2:0);th<Math.PI/2;th+=dTh){const t=th+(rnd()-.5)*dTh*.55,z=(r+.1)*dz/(rows-1)+(rnd()-.5)*13,cs=Math.cos(t),x=O.cx+O.rx*Math.sin(t),y=O.cy+O.ry*cs+z;const k=.72+rnd()*.5;s+=`<ellipse cx="${x.toFixed(1)}" cy="${y.toFixed(1)}" rx="${(22*k*Math.max(cs,.2)).toFixed(1)}" ry="${(13.5*k).toFixed(1)}" fill="url(#bump)"/>`}}return s};
 this.attachShadow({mode:'open'}).innerHTML=`<style>:host{display:block;width:1160px;height:880px}svg{display:block}</style>
<svg width="1160" height="880" viewBox="700 340 1160 880">
<defs>
<filter id="b3" x="-2%" y="-2%" width="104%" height="104%"><feGaussianBlur stdDeviation="4.5"/></filter>
<filter id="b2" x="-2%" y="-2%" width="104%" height="104%"><feGaussianBlur stdDeviation="3"/></filter>
<filter id="b14" x="-10%" y="-10%" width="120%" height="120%"><feGaussianBlur stdDeviation="16"/></filter>
<linearGradient id="bump" x1="0" y1="0" x2="1" y2="1"><stop offset="0" stop-color="#dad7cb"/><stop offset="1" stop-color="#cbc8bb"/></linearGradient>
<radialGradient id="floorG" cx=".5" cy=".49" r=".51"><stop offset="0" stop-color="#8a887c" stop-opacity="0"/><stop offset=".84" stop-color="#8a887c" stop-opacity="0"/><stop offset=".95" stop-color="#8a887c" stop-opacity=".18"/><stop offset="1" stop-color="#77756b" stop-opacity=".5"/></radialGradient>
<linearGradient id="wallG" x1="0" x2="1" y1="0" y2="0"><stop offset="0" stop-color="#77756b" stop-opacity=".2"/><stop offset=".12" stop-color="#77756b" stop-opacity=".03"/><stop offset=".88" stop-color="#77756b" stop-opacity=".03"/><stop offset="1" stop-color="#77756b" stop-opacity=".2"/></linearGradient>
<clipPath id="hull"><path d="M${O.cx-O.rx} ${O.cy}V${O.cy+dz}A${O.rx} ${O.ry} 0 0 0 ${O.cx+O.rx} ${O.cy+dz}V${O.cy}A${O.rx} ${O.ry} 0 0 0 ${O.cx-O.rx} ${O.cy}Z"/></clipPath>
<clipPath id="outerC"><ellipse cx="${O.cx}" cy="${O.cy}" rx="${O.rx}" ry="${O.ry}"/></clipPath>
<clipPath id="innerC"><ellipse cx="${I.cx}" cy="${I.cy}" rx="${I.rx}" ry="${I.ry}"/></clipPath>
<clipPath id="floorC"><ellipse cx="${I.cx}" cy="${I.cy+fz}" rx="${I.rx}" ry="${I.ry}"/></clipPath>
</defs>
<g clip-path="url(#hull)"><rect ${R} fill="#c2bfb2"/><g filter="url(#b2)">${wall()}</g><rect ${R} fill="url(#wallG)"/></g>
<g clip-path="url(#outerC)"><rect ${R} fill="#d6d3c6"/><g filter="url(#b3)">${flat(710,345,1850,1005,52,42,22,18,['#d9d6c9','#dad7ca','#d8d5c8'])}</g></g>
<g clip-path="url(#innerC)">
<ellipse cx="${I.cx}" cy="${I.cy}" rx="${I.rx}" ry="${I.ry}" fill="#c9c7bc"/>
<ellipse cx="${I.cx}" cy="${I.cy+fz}" rx="${I.rx}" ry="${I.ry}" fill="none" stroke="#4f4e4b" stroke-width="34" filter="url(#b14)" opacity=".66"/>
<g clip-path="url(#floorC)"><rect ${R} fill="#d4d1c4"/><g filter="url(#b3)">${flat(790,445,1770,1010,40,32,17,14,['#d9d6c9','#dad7ca','#d8d5c8'])}</g>
<ellipse cx="${I.cx}" cy="${I.cy+fz/2}" rx="${I.rx+2}" ry="${I.ry+fz/2}" fill="url(#floorG)"/>
<ellipse cx="${I.cx}" cy="${I.cy}" rx="${I.rx}" ry="${I.ry}" fill="none" stroke="#8f8c82" stroke-width="20" filter="url(#b14)" opacity=".5"/>
</g></g>
<g fill="none" stroke="#111" stroke-width="1.4">
<path d="M${O.cx-O.rx} ${O.cy}V${O.cy+dz}A${O.rx} ${O.ry} 0 0 0 ${O.cx+O.rx} ${O.cy+dz}V${O.cy}"/>
<ellipse cx="${O.cx}" cy="${O.cy}" rx="${O.rx}" ry="${O.ry}"/>
<ellipse cx="${I.cx}" cy="${I.cy}" rx="${I.rx}" ry="${I.ry}"/>
<path d="M${I.cx-477} 700.5A${I.rx} ${I.ry} 0 0 1 ${I.cx+477} 700.5"/>
</g></svg>`}}
customElements.define('foam-plate',FoamPlate);

class ViewCube extends HTMLElement{connectedCallback(){this.attachShadow({mode:'open'}).innerHTML=`<style>:host{display:block;width:110px;height:110px}svg{display:block}</style>
<svg width="110" height="110" viewBox="0 0 330 330"><defs><filter id="s" x="-30%" y="-30%" width="160%" height="160%"><feGaussianBlur stdDeviation="9"/></filter></defs>
<polygon points="72,200 165,275 272,185 200,240" fill="#aaa" opacity=".55" filter="url(#s)"/>
<polygon points="170,30 272,75 165,130 62,85" fill="#f7f7f7" stroke="#555" stroke-width="2"/>
<polygon points="62,85 165,130 165,265 72,195" fill="#f1f1f1" stroke="#555" stroke-width="2"/>
<polygon points="272,75 268,175 165,265 165,130" fill="#ececec" stroke="#555" stroke-width="2"/>
<text font-family="Liberation Sans" font-size="24" fill="#a0a0a0" transform="matrix(.9 .5 -.7 .55 145 72)">TOP</text>
<text font-family="Liberation Sans" font-size="24" fill="#999" transform="matrix(.95 .33 0 1 78 150)">FRONT</text>
<text font-family="Liberation Sans" font-size="24" fill="#999" transform="matrix(.95 -.4 0 1 185 195)">RIGHT</text>
<path d="M57 60L72 195" stroke="#4747d8" stroke-width="5"/><path d="M72 195L185 275" stroke="#ee8f8f" stroke-width="5"/>
<text x="55" y="50" text-anchor="middle" font-family="Liberation Sans" font-size="38" fill="#7a7ae8">Z</text>
<text x="200" y="304" text-anchor="middle" font-family="Liberation Sans" font-size="38" fill="#f08a8a">X</text></svg>`}}
customElements.define('view-cube',ViewCube);

const panelBase=`border:1px solid #cbcbcb;border-width:2px 1px;background:#f0f0f0;box-sizing:border-box;width:300px;display:flex;align-items:center;font-size:10px;color:#666;`;
class BrowserPanel extends HTMLElement{connectedCallback(){this.attachShadow({mode:'open'}).innerHTML=`<style>
:host{display:block;width:300px}
.h{${panelBase}height:25px;padding:0 11px 0 7px}
.h span{margin-left:6px}
.m{margin-left:auto;width:9px;height:9px;border-radius:50%;background:#222;position:relative}
.m::after{content:"";position:absolute;left:2px;right:2px;top:4px;height:1px;background:#fff}
.rows{padding-top:3px}
</style><div class="h"><svg width="10" height="8"><path d="M5 0V8L0 4ZM10 0V8L5 4Z" fill="#333"/></svg><span>BROWSER</span><i class="m"></i></div><div class="rows"><slot></slot></div>`}}
customElements.define('browser-panel',BrowserPanel);

class TreeRow extends HTMLElement{connectedCallback(){
 const lv=+this.getAttribute('level')||0,e=this.getAttribute('exp'),ic=this.getAttribute('icons').split(' '),sel=this.hasAttribute('selected');
 const exp=e==='open'?`<svg width="12" height="11"><defs><linearGradient id="g" x1="0" x2="1"><stop offset="0" stop-color="#bbb"/><stop offset="1" stop-color="#222"/></linearGradient></defs><path d="M0 10.5L11 .5V10.5Z" fill="url(#g)" stroke="#222" stroke-width=".7"/></svg>`:e==='closed'?`<svg width="9" height="13"><path d="M1 .8L8 6.5L1 12.2Z" fill="#fff" stroke="#333" stroke-width="1.1"/></svg>`:'';
 this.attachShadow({mode:'open'}).innerHTML=`<style>
:host{display:flex;align-items:center;height:24px;padding-left:${16+18*lv}px;font-size:10.7px;color:#444;white-space:nowrap}
.e{width:14px;margin-right:6px;display:flex;justify-content:center;align-items:center;flex:none}
.p{display:flex;align-items:center;height:20px;background:#f6f6f6;padding-right:${this.getAttribute('end')}px}
.i{width:24.5px;display:flex;justify-content:center;flex:none}
.i:first-child{margin-left:-1px}
.t{margin-left:${this.getAttribute('gap')}px}
.s{background:#8f8f8f;color:#fff;font-weight:700;height:16px;line-height:16px;width:57px;box-sizing:border-box;padding-left:9px;margin-left:-1px}
</style><span class="e">${exp}</span><span class="p">${ic.map(n=>`<span class="i"><x-icon name="${n}" w="20"></x-icon></span>`).join('')}<span class="t ${sel?'s':''}"><slot></slot></span>${sel?`<span class="i" style="margin-left:-1px"><x-icon name="target" w="20"></x-icon></span>`:''}</span>`}}
customElements.define('tree-row',TreeRow);

class WorkBottom extends HTMLElement{constructor(){super();this.attachShadow({mode:'open'}).innerHTML=`<style>:host{display:flex;align-items:flex-end}</style><slot></slot>`}}
customElements.define('work-bottom',WorkBottom);

class CommentsPanel extends HTMLElement{connectedCallback(){this.attachShadow({mode:'open'}).innerHTML=`<style>
:host{${panelBase}height:24px;padding:0 11px 0 25px;flex:none}
.m{margin-left:auto;width:9px;height:9px;border-radius:50%;background:#222;position:relative}
.m::before{content:"";position:absolute;left:2px;right:2px;top:4px;height:1px;background:#fff}
.m::after{content:"";position:absolute;top:2px;bottom:2px;left:4px;width:1px;background:#fff}
</style><span>COMMENTS</span><i class="m"></i>`}}
customElements.define('comments-panel',CommentsPanel);

class NavBar extends HTMLElement{connectedCallback(){
 const it=[['orbit',1,33],['lookat',0,27],['hand',0,25],['zoomp',0,26],['zoomw',1,33],['monitor',1,31],['gridi',1,31],['views',1,32],['layers',1,30],['cycle',1,31],['stack',1,31],['box2',1,31],['toolv',1,31],['magnet',1,21]];
 this.attachShadow({mode:'open'}).innerHTML=`<style>
:host{display:flex;align-items:center;height:24px;width:423px;background:#f0f0f0;box-sizing:border-box;margin:0 auto 1px 765px;flex:none;padding-left:1px}
.c{display:flex;align-items:center;height:24px;flex:none}
</style>${it.map(([n,c,w])=>`<span class="c" style="width:${w}px"><x-icon name="${n}" w="19"></x-icon>${c?caret('#444','0 0 0 3px'):''}</span>`).join('')}`}}
customElements.define('nav-bar',NavBar);

class ChatMark extends HTMLElement{connectedCallback(){this.attachShadow({mode:'open'}).innerHTML=`<style>:host{display:block;width:16px;height:16px;margin:0 14px 5px 0;flex:none}svg{display:block}</style><svg width="16" height="16" viewBox="0 0 16 16"><path d="M8 .5A7.5 7.5 0 1 0 8 15.5H15.5V8A7.5 7.5 0 0 0 8 .5Z" fill="#1a1a1a"/><path d="M4 10L11 5M5 12L12 8" stroke="#ccc" stroke-width="1.2" stroke-dasharray="2 1"/></svg>`}}
customElements.define('chat-mark',ChatMark);

class TaskBar extends HTMLElement{connectedCallback(){
 const apps=[['taskview',0,24],['copilot',0,26],['explorer',2,26],['es',0,28],['ss',0,24],['bluetool',0,28],['vbox',1,28],['firefox',2,28],['misc',0,28],['edge',1,28],['chrome',1,28],['vscode',1,28],['putty',0,28],['filezilla',1,28],['fusion',3,28],['resolve',1,28],['lcalc',2,28],['lwrite',2,28],['acrobat',1,28],['cdoc',1,28],['arduino',1,28],['limp',1,28],['calc',1,28],['gimp',1,28]];
 this.attachShadow({mode:'open'}).innerHTML=`<style>
:host{display:flex;height:40px;align-items:stretch;background:linear-gradient(90deg,#e9e6a8 0,#e8e4b4 18%,#dfe0c0 30%,#dde6b4 42%,#dde6b4 60%,#d5e2cc 78%,#cbd9e0 92%,#cad8e0 100%);position:relative}
.st{width:48px;display:flex;align-items:center;justify-content:center;flex:none}
.sb{width:288px;flex:none;background:#fff;border:1px solid #ccc;border-bottom:0;box-sizing:border-box;display:flex;align-items:center;padding-left:12px;font-size:14px;color:#222;overflow:hidden}
.sb span{margin-left:10px;white-space:nowrap;letter-spacing:.2px}
.sb svg.d{margin-left:auto;margin-right:10px;flex:none;align-self:flex-start}
.a{width:49px;flex:none;display:flex;align-items:center;justify-content:center;position:relative;box-sizing:border-box;padding-bottom:2px}
.a.on{background:rgba(255,255,255,.55)}
.u{position:absolute;left:4px;right:4px;bottom:0;height:2px;background:#2f8fc9}
.u.x::after{content:"";position:absolute;left:100%;width:8px;top:0;height:2px;background:#7fb9dc}
.u.w{left:0;right:0}
.clock{margin-left:auto;width:58px;margin-right:3px;font-size:12px;color:#222;text-align:center;line-height:18px;padding-top:2px;flex:none;white-space:nowrap;box-sizing:border-box}
</style>
<div class="st"><svg width="18" height="18" viewBox="0 0 18 18"><path d="M0 2.5L7.8 1.4V8.5H0ZM8.8 1.2L18 0V8.5H8.8ZM0 9.5H7.8V16.6L0 15.5ZM8.8 9.5H18V18L8.8 16.8Z" fill="#111"/></svg></div>
<div class="sb"><svg width="16" height="18" viewBox="0 0 16 18"><circle cx="10" cy="6.5" r="5.2" fill="none" stroke="#222" stroke-width="1.2"/><path d="M6.5 10.5L1 17" stroke="#222" stroke-width="1.4"/></svg><span>Type here to search</span>
<svg class="d" width="60" height="40" viewBox="0 0 60 40"><circle cx="30" cy="48" r="31" fill="#7fc4ea"/><path d="M6 38Q16 24 30 30Q44 24 54 38V50H6Z" fill="#3aa44a"/><path d="M11 10L30 33L49 10L42 5L30 17L18 5Z" fill="#c81e2e"/><path d="M18 5L30 21L42 5M12 10L30 28L48 10M22 5L30 14L38 5M24 22L36 10M36 22L24 10" fill="none" stroke="#fff" stroke-width="1.1"/></svg></div>
${apps.map(([n,u,s])=>`<div class="a ${u===3?'on':''}"><x-icon name="${n}" w="${s}" vb="0 0 32 32"></x-icon>${u?`<i class="u ${u===2?'x':''} ${u===3?'w':''}"></i>`:''}</div>`).join('')}
<div class="clock">3:49 PM<br>12/3/2024</div>`}}
customElements.define('task-bar',TaskBar);
</script>
</body>
</html>
